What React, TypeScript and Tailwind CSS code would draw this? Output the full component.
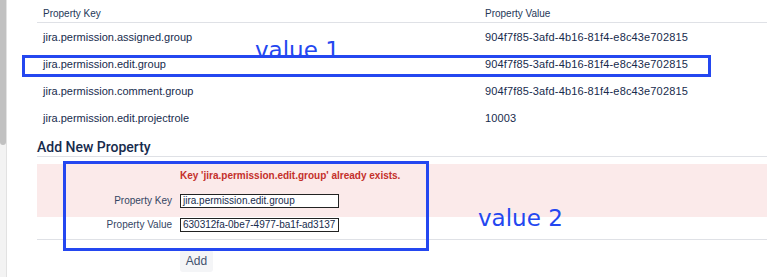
import React from "react";

const rows = [
    { key: "jira.permission.assigned.group", value: "904f7f85-3afd-4b16-81f4-e8c43e702815" },
    { key: "jira.permission.edit.group", value: "904f7f85-3afd-4b16-81f4-e8c43e702815" },
    { key: "jira.permission.comment.group", value: "904f7f85-3afd-4b16-81f4-e8c43e702815" },
    { key: "jira.permission.edit.projectrole", value: "10003" },
];

export default function App() {
    return (
        <div className="relative flex w-[767px] h-[277px] overflow-hidden bg-white text-[#172b4d]" style={{ fontFamily: '"Liberation Sans", Arial, sans-serif' }}>
            {/* page scrollbar on the left */}
            <div className="w-[7px] shrink-0 bg-[#f3f3f3] border-r border-[#e2e2e2]">
                <div className="w-[6px] h-[145px] rounded-b-[3px] bg-[#c1c1c1]" />
            </div>

            <div className="flex-1 pl-[30px]">
                <div className="flex h-[23px] items-center pt-[4px] border-b border-[#dfe1e6] text-[10px] text-[#253858]">
                    <div className="w-[442px] pl-[6px]">Property Key</div>
                    <div className="pl-[6px]">Property Value</div>
                </div>
                {rows.map((r) => (
                    <div key={r.key} className="flex h-[27px] items-center pt-[2px] text-[11px]">
                        <div className="w-[442px] pl-[6px]">{r.key}</div>
                        <div className="pl-[6px] tracking-[0.15px]">{r.value}</div>
                    </div>
                ))}

                <div className="mt-[7px] h-[19px] leading-[18px] border-b border-[#dfe1e6] text-[14px] font-medium" style={{ fontFamily: "Roboto, sans-serif" }}>
                    Add New Property
                </div>

                <div className="mt-[7px] bg-[#fbeaea] pt-[6px] pb-[9px]">
                    <div className="ml-[143px] h-[12px] leading-[12px] text-[10px] font-bold text-[#c4302b]">
                        Key 'jira.permission.edit.group' already exists.
                    </div>
                    <div className="mt-[11px] flex items-center gap-[8px]">
                        <div className="w-[135px] text-right text-[10px] text-[#344563]">Property Key</div>
                        <div className="w-[159px] h-[14px] border border-[#222] bg-white px-[2px] text-[10px] leading-[12px] overflow-hidden whitespace-nowrap">jira.permission.edit.group</div>
                    </div>
                </div>
                <div className="flex items-center gap-[8px]">
                    <div className="w-[135px] text-right text-[10px] text-[#344563]">Property Value</div>
                    <div className="w-[159px] h-[14px] border border-[#222] bg-white px-[2px] text-[10px] leading-[12px] overflow-hidden whitespace-nowrap">630312fa-0be7-4977-ba1f-ad3137</div>
                </div>
                <div className="mt-[7px] border-b border-[#dfe1e6]" />
                <div className="ml-[143px] mt-[10px] flex h-[22px] w-[33px] items-center justify-center rounded-[3px] bg-[#f4f5f7] text-[12px] text-[#42526e]">
                    Add
                </div>
            </div>

            {/* annotations */}
            <div className="absolute left-[22px] top-[55px] w-[689px] h-[22px] border-[3px] border-[#2447f0]" />
            <div className="absolute left-[255px] top-[39px] text-[23px] leading-none text-[#2447f0]" style={{ fontFamily: '"DejaVu Sans", sans-serif' }}>value 1</div>
            <div className="absolute left-[63px] top-[161px] w-[366px] h-[90px] border-[3px] border-[#2447f0]" />
            <div className="absolute left-[478px] top-[207px] text-[23px] leading-none text-[#2447f0]" style={{ fontFamily: '"DejaVu Sans", sans-serif' }}>value 2</div>
        </div>
    );
}
